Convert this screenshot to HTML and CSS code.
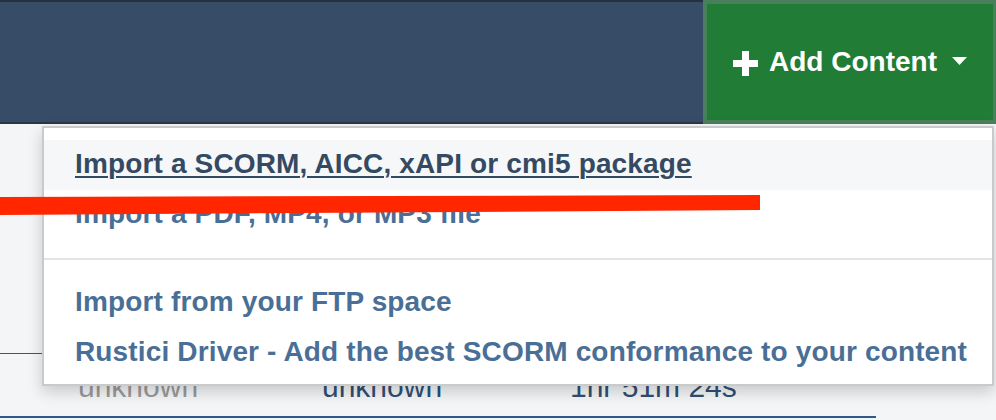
FILE: index.html
```html
<!DOCTYPE html>
<html>
<head>
<meta charset="utf-8">
<link rel="stylesheet" href="styles.css">
</head>
<body>
<header class="topbar">
  <div class="spacer"></div>
  <button class="add-btn">
    <svg class="plus" width="25" height="25" viewBox="0 0 25 25"><path d="M9 0h7v9h9v7h-9v9H9v-9H0V9h9z" fill="#fff"/></svg>
    <span class="add-label">Add Content</span>
    <svg class="caret" width="15" height="8" viewBox="0 0 15 8"><path d="M0 0h15L7.5 8z" fill="#fff"/></svg>
  </button>
</header>
<main class="page">
  <div class="table">
    <div class="row-line"></div>
    <div class="row">
      <span class="cell c1 muted">unknown</span>
      <span class="cell c2">unknown</span>
      <span class="cell c3">1hr 51m 24s</span>
    </div>
  </div>
</main>
<ul class="dropdown">
  <li class="item active"><a>Import a SCORM, AICC, xAPI or cmi5 package</a></li>
  <li class="item"><a>Import a PDF, MP4, or MP3 file</a></li>
  <li class="divider"></li>
  <li class="item"><a>Import from your FTP space</a></li>
  <li class="item"><a>Rustici Driver - Add the best SCORM conformance to your content</a></li>
</ul>
<svg class="redline" width="770" height="30" viewBox="0 0 770 30"><polygon points="0,9 760,7 760,22 0,27" fill="#ff2600"/></svg>
</body>
</html>
```
FILE: styles.css
```css
* { box-sizing: border-box; }
html, body { margin: 0; padding: 0; }
body {
  width: 996px;
  height: 420px;
  overflow: hidden;
  background: #f4f5f7;
  font-family: "Liberation Sans", Arial, sans-serif;
  position: relative;
}
.topbar {
  display: flex;
  height: 124px;
  background: #374d67;
  border-top: 2px solid #26313f;
  border-bottom: 2px solid #2a3648;
}
.spacer { flex: 1; }
.add-btn {
  width: 293px;
  margin-top: -2px;
  margin-bottom: -2px;
  background: #217c36;
  border: 4px solid #4a7f5e;
  border-right-width: 3px;
  display: flex;
  align-items: center;
  padding: 0 0 0 26px;
  color: #fff;
  font-family: "Liberation Sans", Arial, sans-serif;
  font-weight: bold;
  font-size: 28px;
}
.plus { margin-right: 11px; margin-top: 2px; }
.add-label { margin-right: 15px; }
.caret { margin-top: -2px; }
.page {
  padding-top: 229px;
}
.table { width: 876px; }
.row-line { border-top: 1px solid #2f5a87; }
.row {
  display: flex;
  height: 64px;
  align-items: flex-end;
  padding-bottom: 14px;
  border-bottom: 2px solid #2f5a87;
  font-size: 30px;
  color: #2f4f73;
}
.cell { display: block; line-height: 30px; }
.c1 { margin-left: 78px; width: 244px; }
.c2 { width: 248px; }
.muted { color: #9a9a9a; }
.dropdown {
  position: absolute;
  top: 126px;
  left: 42px;
  width: 952px;
  height: 260px;
  margin: 0;
  padding: 12px 0 0;
  list-style: none;
  background: #fff;
  border: 2px solid #cacaca;
  box-shadow: 0 6px 14px rgba(0,0,0,0.18);
}
.item {
  height: 50px;
  display: flex;
  align-items: center;
  padding: 0 0 3px 31px;
  font-size: 28px;
  font-weight: bold;
  letter-spacing: 0.15px;
  color: #4a6f96;
}
.item a { display: block; }
.item.active { background: #f6f7f9; color: #344a63; }
.item.active a { text-decoration: underline; text-underline-offset: 3px; text-decoration-thickness: 2px; }
.divider {
  height: 2px;
  margin: 18px 0;
  background: #e4e4e4;
}
.redline {
  position: absolute;
  left: 0;
  top: 188px;
}
```
